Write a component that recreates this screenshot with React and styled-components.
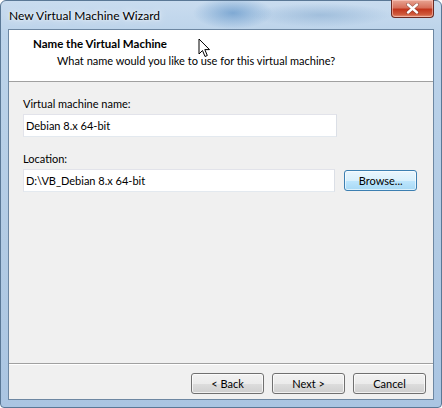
import React from 'react'
import styled, { createGlobalStyle } from 'styled-components'

const GlobalStyle = createGlobalStyle`
    html, body {
        margin: 0;
        padding: 0;
        background: #ffffff;
    }
    body {
        font-family: Lato, "Open Sans", sans-serif;
        font-size: 11px;
        color: #000;
    }
`

function App() {
    return (
        <>
            <GlobalStyle />
            <Window>
                <TitleBar>
                    <Caption>New Virtual Machine Wizard</Caption>
                    <CloseButton aria-label="Close">
                        <svg width="13" height="11" viewBox="0 0 13 11">
                            <path d="M2 1.5 L11 9.5 M11 1.5 L2 9.5" stroke="#3a1a1a" strokeWidth="3.6" strokeLinecap="round" opacity="0.45" />
                            <path d="M2 1.5 L11 9.5 M11 1.5 L2 9.5" stroke="#ffffff" strokeWidth="2.4" strokeLinecap="round" />
                        </svg>
                    </CloseButton>
                </TitleBar>

                <Client>
                    <Header>
                        <HeaderTitle>Name the Virtual Machine</HeaderTitle>
                        <HeaderText>What name would you like to use for this virtual machine?</HeaderText>
                    </Header>

                    <Body>
                        <Field>
                            <Label>Virtual machine name:</Label>
                            <Row>
                                <TextBox defaultValue="Debian 8.x 64-bit" />
                            </Row>
                        </Field>
                        <Field>
                            <Label>Location:</Label>
                            <Row>
                                <TextBox defaultValue="D:\VB_Debian 8.x 64-bit" />
                                <Button $focused>Browse...</Button>
                            </Row>
                        </Field>
                    </Body>

                    <Footer>
                        <Button>&lt; Back</Button>
                        <Button>Next &gt;</Button>
                        <Button>Cancel</Button>
                    </Footer>
                </Client>

                <Cursor width="13" height="20" viewBox="0 0 13 20">
                    <path d="M1 1 L1 16 L4.5 12.5 L7 18.5 L9.3 17.5 L6.8 11.6 L11.5 11.6 Z" fill="#ffffff" stroke="#000000" strokeWidth="1" strokeLinejoin="miter" />
                </Cursor>
            </Window>
        </>
    )
}

export default App

const Window = styled.div`
    position: relative;
    width: 442px;
    height: 408px;
    box-sizing: border-box;
    display: flex;
    flex-direction: column;
    padding: 0 7px 7px 7px;
    border-radius: 6px 6px 4px 4px;
    border: 1px solid #5a7896;
    background:
        radial-gradient(ellipse 40px 16px at 232px 12px, rgba(70, 130, 190, 0.55), rgba(70, 130, 190, 0) 100%),
        radial-gradient(ellipse 70px 12px at 320px 14px, rgba(120, 160, 200, 0.45), rgba(120, 160, 200, 0) 100%),
        linear-gradient(180deg, #c9dcef 0%, #bcd3ea 8%, #b2cbe4 60%, #aac5e2 100%);
`

const TitleBar = styled.div`
    height: 28px;
    display: flex;
    justify-content: space-between;
    align-items: flex-start;
`

const Caption = styled.div`
    padding: 7px 0 0 1px;
    font-family: Lato, "Open Sans", sans-serif;
    font-size: 12px;
    color: #000;
    text-shadow: 0 0 8px rgba(255, 255, 255, 0.9), 0 0 3px rgba(255, 255, 255, 0.9);
`

const CloseButton = styled.div`
    width: 43px;
    height: 18px;
    margin-top: -1px;
    display: flex;
    align-items: center;
    justify-content: center;
    box-sizing: border-box;
    border: 1px solid #6b2a22;
    border-top: none;
    border-radius: 0 0 4px 4px;
    background: linear-gradient(180deg, #e8a493 0%, #d7705b 45%, #c2351c 55%, #cf5a3c 85%, #e5957b 100%);
    box-shadow: inset 0 0 0 1px rgba(255, 210, 200, 0.55);
`

const Client = styled.div`
    flex: 1;
    display: flex;
    flex-direction: column;
    background: #f0f0f0;
    border: 1px solid #6d87a2;
    min-height: 0;
`

const Header = styled.div`
    height: 52px;
    box-sizing: border-box;
    background: #ffffff;
    border-bottom: 1px solid #a0a0a0;
    padding: 6px 0 0 24px;
`

const HeaderTitle = styled.div`
    font-weight: bold;
    font-size: 11.5px;
    line-height: 16px;
`

const HeaderText = styled.div`
    padding-left: 24px;
    font-size: 11px;
    line-height: 17px;
`

const Body = styled.div`
    flex: 1;
    display: flex;
    flex-direction: column;
    gap: 14px;
    padding: 14px 16px 0 14px;
`

const Field = styled.div`
    display: flex;
    flex-direction: column;
    gap: 2px;
`

const Label = styled.div`
    line-height: 16px;
`

const Row = styled.div`
    display: flex;
    align-items: center;
    gap: 9px;
`

const TextBox = styled.input`
    width: 314px;
    height: 23px;
    box-sizing: border-box;
    margin: 0;
    padding: 0 2px;
    border: 1px solid #abadb3;
    border-top-color: #e2e3ea;
    border-left-color: #e2e3ea;
    border-right-color: #dbdfe6;
    border-bottom-color: #e3e9ef;
    background: #ffffff;
    font-family: Lato, "Open Sans", sans-serif;
    font-size: 11px;
    color: #000;
    outline: none;
`

const Button = styled.div`
    width: 73px;
    height: 21px;
    box-sizing: border-box;
    display: flex;
    align-items: center;
    justify-content: center;
    border-radius: 3px;
    border: 1px solid ${p => (p.$focused ? '#3c7fb1' : '#707070')};
    background: ${p => (p.$focused
        ? 'linear-gradient(180deg, #eaf6fd 0%, #d9f0fc 50%, #bee6fd 51%, #a7d9f5 100%)'
        : 'linear-gradient(180deg, #f2f2f2 0%, #ebebeb 50%, #dddddd 51%, #cfcfcf 100%)')};
    box-shadow: inset 0 0 0 1px ${p => (p.$focused ? 'rgba(255,255,255,0.6)' : 'rgba(255,255,255,0.7)')};
    font-size: 11px;
    color: #000;
`

const Footer = styled.div`
    height: 36px;
    box-sizing: border-box;
    display: flex;
    justify-content: flex-end;
    align-items: flex-start;
    gap: 8px;
    padding: 9px 7px 0 0;
    border-top: 1px solid #a0a0a0;
    box-shadow: inset 0 1px 0 #ffffff;
`

const Cursor = styled.svg`
    position: absolute;
    left: 197px;
    top: 37px;
`
